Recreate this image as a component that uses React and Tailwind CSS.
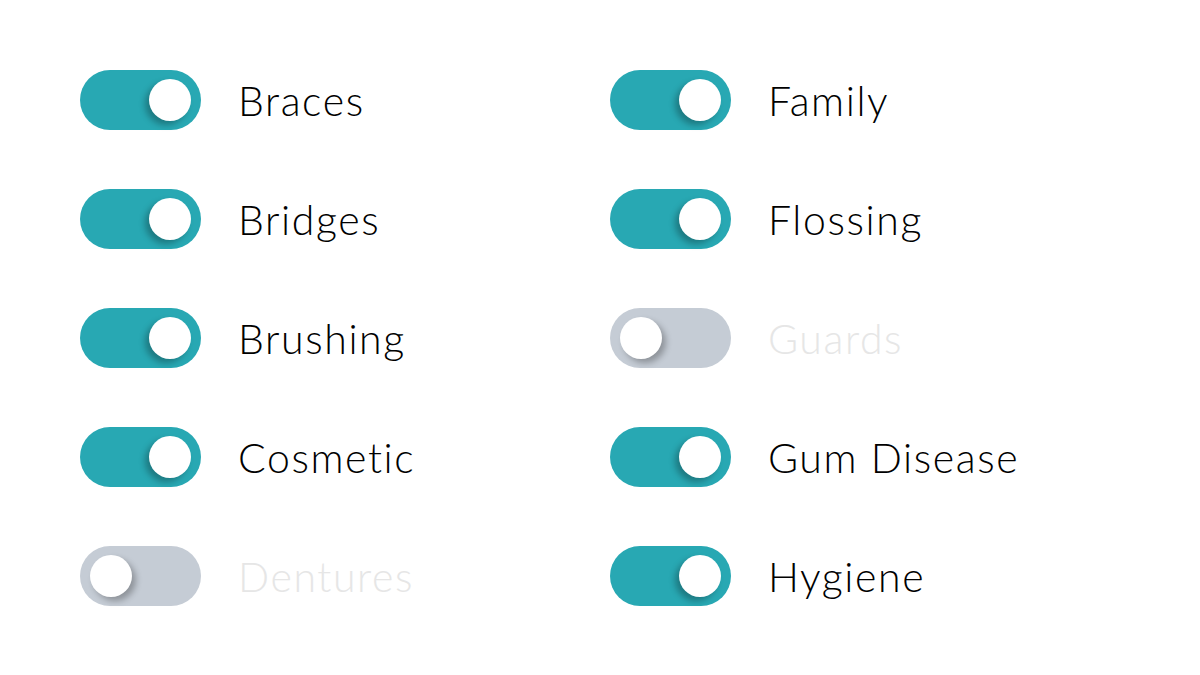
import React from 'react';

const left = [
  { label: 'Braces', on: true },
  { label: 'Bridges', on: true },
  { label: 'Brushing', on: true },
  { label: 'Cosmetic', on: true },
  { label: 'Dentures', on: false },
];

const right = [
  { label: 'Family', on: true },
  { label: 'Flossing', on: true },
  { label: 'Guards', on: false },
  { label: 'Gum Disease', on: true },
  { label: 'Hygiene', on: true },
];

function Toggle({ label, on }) {
  return (
    <div className="flex items-center h-[60px]">
      <div
        className={`w-[121px] h-[60px] rounded-full flex items-center px-[10px] ${
          on ? 'bg-[#28a8b3] justify-end' : 'bg-[#c5ccd5] justify-start'
        }`}
      >
        <div
          className={`w-[42px] h-[42px] rounded-full bg-white ${
            on ? 'shadow-[-4px_4px_6px_rgba(0,0,0,0.28)]' : 'shadow-[4px_4px_6px_rgba(0,0,0,0.28)]'
          }`}
        />
      </div>
      <span
        className={`ml-[37px] text-[41px] font-light leading-none tracking-[1.6px] ${on ? 'text-black' : 'text-[#e6e6e6]'}`}
        style={{ fontFamily: 'Lato, "Noto Sans", sans-serif' }}
      >
        {label}
      </span>
    </div>
  );
}

export default function App() {
  return (
    <div className="w-[1200px] h-[675px] bg-white pl-[80px] pt-[70px]">
      <div className="grid grid-cols-[530px_auto] gap-y-[59px]">
        {left.map((item, i) => (
          <React.Fragment key={item.label}>
            <Toggle {...item} />
            <Toggle {...right[i]} />
          </React.Fragment>
        ))}
      </div>
    </div>
  );
}
